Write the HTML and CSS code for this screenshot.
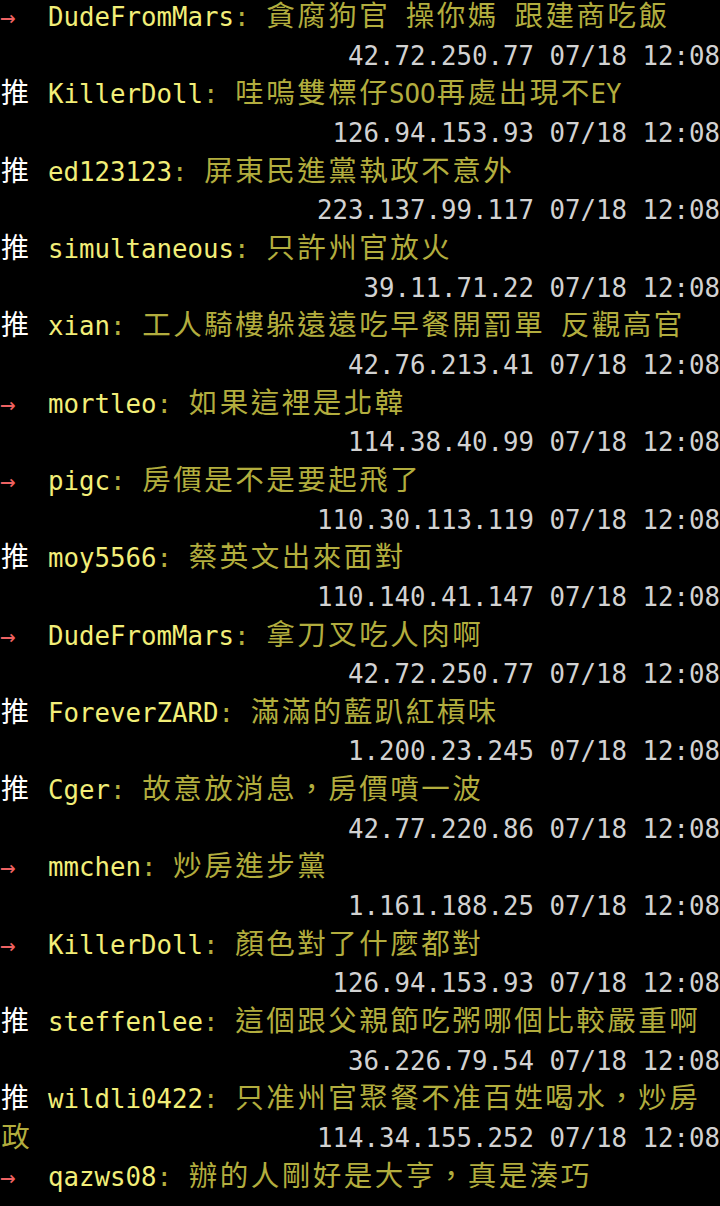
FILE: index.html
```html
<!DOCTYPE html>
<html lang="zh-Hant">
<head>
  <meta charset="UTF-8">
  <title>推文</title>
  <link rel="stylesheet" href="styles.css">
</head>
<body>

  <div class="term">
    <div class="line"><span class="tag arrow">→</span><span class="uid">DudeFromMars</span><span class="msg">: <span class="w">貪腐狗官</span> <span class="w">操你媽</span> <span class="w">跟建商吃飯</span></span></div>
    <div class="line meta">42.72.250.77 07/18 12:08</div>

    <div class="line"><span class="tag push">推</span><span class="uid">KillerDoll</span><span class="msg">: <span class="w">哇嗚雙標仔</span>SOO<span class="w">再處出現不</span>EY</span></div>
    <div class="line meta">126.94.153.93 07/18 12:08</div>

    <div class="line"><span class="tag push">推</span><span class="uid">ed123123</span><span class="msg">: <span class="w">屏東民進黨執政不意外</span></span></div>
    <div class="line meta">223.137.99.117 07/18 12:08</div>

    <div class="line"><span class="tag push">推</span><span class="uid">simultaneous</span><span class="msg">: <span class="w">只許州官放火</span></span></div>
    <div class="line meta">39.11.71.22 07/18 12:08</div>

    <div class="line"><span class="tag push">推</span><span class="uid">xian</span><span class="msg">: <span class="w">工人騎樓躲遠遠吃早餐開罰單</span> <span class="w">反觀高官</span></span></div>
    <div class="line meta">42.76.213.41 07/18 12:08</div>

    <div class="line"><span class="tag arrow">→</span><span class="uid">mortleo</span><span class="msg">: <span class="w">如果這裡是北韓</span></span></div>
    <div class="line meta">114.38.40.99 07/18 12:08</div>

    <div class="line"><span class="tag arrow">→</span><span class="uid">pigc</span><span class="msg">: <span class="w">房價是不是要起飛了</span></span></div>
    <div class="line meta">110.30.113.119 07/18 12:08</div>

    <div class="line"><span class="tag push">推</span><span class="uid">moy5566</span><span class="msg">: <span class="w">蔡英文出來面對</span></span></div>
    <div class="line meta">110.140.41.147 07/18 12:08</div>

    <div class="line"><span class="tag arrow">→</span><span class="uid">DudeFromMars</span><span class="msg">: <span class="w">拿刀叉吃人肉啊</span></span></div>
    <div class="line meta">42.72.250.77 07/18 12:08</div>

    <div class="line"><span class="tag push">推</span><span class="uid">ForeverZARD</span><span class="msg">: <span class="w">滿滿的藍趴紅槓味</span></span></div>
    <div class="line meta">1.200.23.245 07/18 12:08</div>

    <div class="line"><span class="tag push">推</span><span class="uid">Cger</span><span class="msg">: <span class="w">故意放消息，房價噴一波</span></span></div>
    <div class="line meta">42.77.220.86 07/18 12:08</div>

    <div class="line"><span class="tag arrow">→</span><span class="uid">mmchen</span><span class="msg">: <span class="w">炒房進步黨</span></span></div>
    <div class="line meta">1.161.188.25 07/18 12:08</div>

    <div class="line"><span class="tag arrow">→</span><span class="uid">KillerDoll</span><span class="msg">: <span class="w">顏色對了什麼都對</span></span></div>
    <div class="line meta">126.94.153.93 07/18 12:08</div>

    <div class="line"><span class="tag push">推</span><span class="uid">steffenlee</span><span class="msg">: <span class="w">這個跟父親節吃粥哪個比較嚴重啊</span></span></div>
    <div class="line meta">36.226.79.54 07/18 12:08</div>

    <div class="line"><span class="tag push">推</span><span class="uid">wildli0422</span><span class="msg">: <span class="w">只准州官聚餐不准百姓喝水，炒房</span></span></div>
    <div class="line meta split"><span class="msg w">政</span><span>114.34.155.252 07/18 12:08</span></div>

    <div class="line"><span class="tag arrow">→</span><span class="uid">qazws08</span><span class="msg">: <span class="w">辦的人剛好是大亨，真是湊巧</span></span></div>
  </div>

</body>
</html>
```

FILE: styles.css
```css
:root {
  --bg: #000;
  --uid: #f2ee78;
  --msg: #b2ad3e;
  --meta: #d2d2d2;
  --arrow: #ee6262;
  --push: #ffffff;
  --col: 15.5px;
}

* {
  box-sizing: border-box;
}

html,
body {
  background: var(--bg);
}

body {
  margin: 0;
  overflow: hidden;
  font-family: "DejaVu Sans Mono", monospace;
  font-size: 25.75px;
}

.term {
  margin-top: -2px;
}

.line {
  height: 38.67px;
  line-height: 38.67px;
  white-space: pre;
}

.meta {
  color: var(--meta);
  text-align: right;
}

.split {
  display: flex;
  justify-content: space-between;
  align-items: baseline;
}

.tag {
  display: inline-block;
  width: calc(var(--col) * 3 + 1.5px);
}

.arrow {
  color: var(--arrow);
}

.push {
  color: var(--push);
  font-family: "Noto Sans CJK TC", sans-serif;
  font-size: 28px;
  line-height: 1;
  padding-left: 1px;
}

.uid {
  color: var(--uid);
}

.msg {
  color: var(--msg);
}

/* double-width cells, like the terminal */
.w {
  font-family: "Noto Sans CJK TC", sans-serif;
  font-size: 28.5px;
  line-height: 1;
  letter-spacing: 2.5px;
  padding-left: 1.25px;
  margin-right: -1.25px;
}
```
